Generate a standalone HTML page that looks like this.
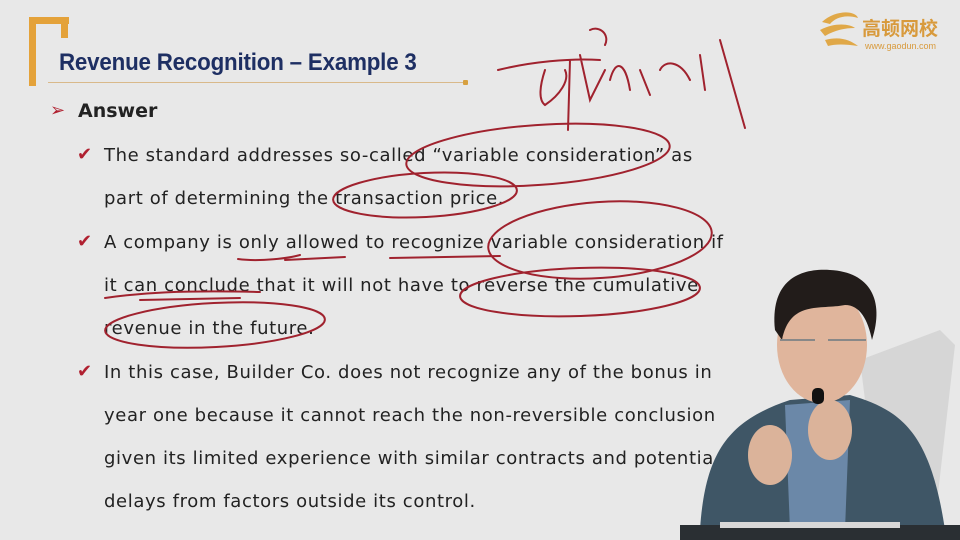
<!DOCTYPE html>
<html><head><meta charset="utf-8"><style>
html,body{margin:0;padding:0}
body{width:960px;height:540px;overflow:hidden;background:#e8e8e8;position:relative;font-family:"DejaVu Sans","Liberation Sans",sans-serif}
.t{position:absolute;left:104px;font-size:18px;color:#222;white-space:nowrap;font-family:"DejaVu Sans",sans-serif;letter-spacing:0.62px}
.ck{position:absolute;left:77px;color:#b02030;font-size:18px;font-family:"DejaVu Sans",sans-serif}
</style></head><body>
<div style="position:absolute;left:29px;top:17px;width:7px;height:69px;background:#e4a23a"></div>
<div style="position:absolute;left:29px;top:17px;width:40px;height:7px;background:#e4a23a"></div>
<div style="position:absolute;left:61px;top:17px;width:7px;height:21px;background:#e4a23a"></div>
<div style="position:absolute;left:59px;top:49px;font-family:'Liberation Sans',sans-serif;font-weight:bold;font-size:24px;color:#1e2f63;transform:scaleX(0.93);transform-origin:left;letter-spacing:-0.2px">Revenue Recognition – Example 3</div>
<div style="position:absolute;left:48px;top:82px;width:417px;height:1px;background:#d9b98a"></div>
<div style="position:absolute;left:463px;top:80px;width:5px;height:5px;background:#d7a040;border-radius:1px"></div>
<div style="position:absolute;left:50px;top:100px;color:#b02030;font-size:18px">➢</div>
<div style="position:absolute;left:78px;top:100px;font-size:19px;font-weight:bold;color:#222;font-family:'DejaVu Sans',sans-serif">Answer</div>

<div class="ck" style="top:144px">✔</div>
<div class="t" style="top:145px">The standard addresses so-called “variable consideration” as</div>
<div class="t" style="top:188px">part of determining the transaction price.</div>
<div class="ck" style="top:231px">✔</div>
<div class="t" style="top:232px">A company is only allowed to recognize variable consideration if</div>
<div class="t" style="top:275px">it can conclude that it will not have to reverse the cumulative</div>
<div class="t" style="top:318px">revenue in the future.</div>
<div class="ck" style="top:361px">✔</div>
<div class="t" style="top:362px">In this case, Builder Co. does not recognize any of the bonus in</div>
<div class="t" style="top:405px">year one because it cannot reach the non-reversible conclusion</div>
<div class="t" style="top:448px">given its limited experience with similar contracts and potentia</div>
<div class="t" style="top:491px">delays from factors outside its control.</div>

<svg style="position:absolute;left:0;top:0" width="960" height="540" viewBox="0 0 960 540">
<g fill="none" stroke="#a0222e" stroke-width="2" stroke-linecap="round">
<path d="M498 70 C530 62 570 58 600 60 M545 70 C540 85 538 100 545 105 C560 95 570 80 565 70 M570 60 L568 130 M580 55 L590 100 L605 70 M610 80 C615 60 625 60 630 90 M640 70 L650 95 M660 70 C665 60 680 60 690 80 M700 55 L705 90 M720 40 L745 128 M590 30 C600 25 610 35 605 45"/>
<ellipse cx="538" cy="155" rx="132" ry="30" transform="rotate(-4 538 155)"/>
<ellipse cx="425" cy="195" rx="92" ry="22" transform="rotate(-3 425 195)"/>
<ellipse cx="600" cy="240" rx="112" ry="38" transform="rotate(-4 600 240)"/>
<ellipse cx="580" cy="292" rx="120" ry="24" transform="rotate(-2 580 292)"/>
<ellipse cx="215" cy="325" rx="110" ry="22" transform="rotate(-3 215 325)"/>
<path d="M238 259 C260 262 290 258 300 255 M285 260 L345 257 M390 258 L500 256 M105 298 C140 293 180 290 260 292 M140 300 L240 298"/>
</g>
<path d="M860 360 L940 330 L955 345 L935 520 L880 520 Z" fill="#cfcfcf" opacity="0.7"/>
<path d="M700 530 C705 450 730 420 790 400 L850 395 C900 410 930 430 945 530 Z" fill="#3f5666"/>
<path d="M785 405 L850 400 L845 530 L790 530 Z" fill="#6b88a8"/>
<ellipse cx="822" cy="345" rx="45" ry="58" fill="#e0b59c"/>
<path d="M775 330 C770 280 800 268 830 270 C870 272 885 300 872 340 C868 320 860 305 845 305 C820 310 790 300 782 340 Z" fill="#221c1a"/>
<path d="M780 340 h35 M828 340 h38" stroke="#888" stroke-width="2"/>
<ellipse cx="770" cy="455" rx="22" ry="30" fill="#dbb39a"/>
<ellipse cx="830" cy="430" rx="22" ry="30" fill="#dbb39a"/>
<rect x="812" y="388" width="12" height="16" rx="5" fill="#111"/>
<rect x="680" y="525" width="280" height="15" fill="#2a2f33"/>
<rect x="720" y="522" width="180" height="6" fill="#d8d8d8"/>
<path d="M822 22 C835 10 855 10 858 18 C845 14 835 18 830 24 Z M820 30 C835 22 850 24 855 28 C845 28 835 30 825 36 Z M825 40 C840 36 850 40 858 46 C845 44 835 44 828 46 Z" fill="#e0a848"/>
</svg>
<div style="position:absolute;left:862px;top:18px;font-family:'Noto Sans CJK SC',sans-serif;font-size:19px;color:#d89a3c;font-weight:bold;line-height:1">高顿网校</div>
<div style="position:absolute;left:865px;top:41px;font-size:9px;color:#d89a3c;font-family:'Liberation Sans',sans-serif">www.gaodun.com</div>
</body></html>
